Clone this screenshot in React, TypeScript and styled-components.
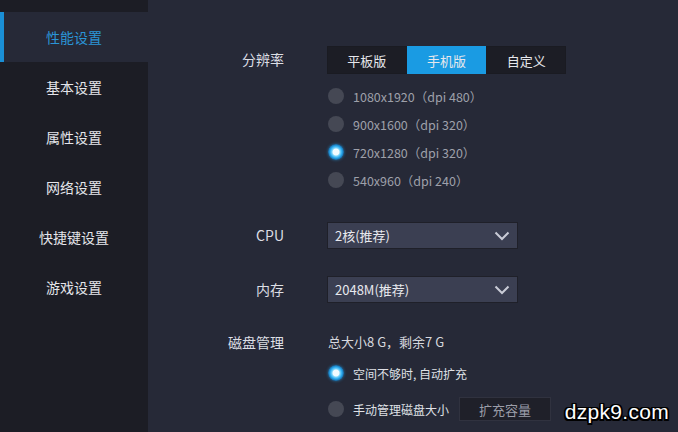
import React from 'react';
import styled, { createGlobalStyle } from 'styled-components';

const GlobalStyle = createGlobalStyle`
  html, body {
    margin: 0;
    padding: 0;
    background: #262937;
  }
  body {
    font-family: "Noto Sans CJK SC", "Noto Sans", sans-serif;
  }
`;

const menuItems = ['性能设置', '基本设置', '属性设置', '网络设置', '快捷键设置', '游戏设置'];
const resolutions = [
  '1080x1920（dpi 480）',
  '900x1600（dpi 320）',
  '720x1280（dpi 320）',
  '540x960（dpi 240）',
];

const Chevron: React.FC = () => (
  <svg width="16" height="10" viewBox="0 0 16 10">
    <path d="M1.5 1.5 L8 8 L14.5 1.5" fill="none" stroke="#c9cbd6" strokeWidth="2" />
  </svg>
);

const App: React.FC = () => {
  return (
    <Page>
      <GlobalStyle />
      <Sidebar>
        <SideTop />
        {menuItems.map((item, i) => (
          <MenuItem key={item} $active={i === 0}>
            {item}
          </MenuItem>
        ))}
      </Sidebar>

      <Main>
        <FormRow>
          <Label>分辨率</Label>
          <Control>
            <Segmented>
              <Segment>平板版</Segment>
              <Segment $active>手机版</Segment>
              <Segment>自定义</Segment>
            </Segmented>
            <RadioList>
              {resolutions.map((r, i) => (
                <RadioRow key={r}>
                  <Radio $checked={i === 2} />
                  <RadioText>{r}</RadioText>
                </RadioRow>
              ))}
            </RadioList>
          </Control>
        </FormRow>

        <FormRow $gap={28}>
          <Label>CPU</Label>
          <Control>
            <Select>
              <span>2核(推荐)</span>
              <Chevron />
            </Select>
          </Control>
        </FormRow>

        <FormRow $gap={27}>
          <Label>内存</Label>
          <Control>
            <Select>
              <span>2048M(推荐)</span>
              <Chevron />
            </Select>
          </Control>
        </FormRow>

        <FormRow $gap={29}>
          <Label $lh={20}>磁盘管理</Label>
          <Control>
            <DiskInfo>总大小8 G，剩余7 G</DiskInfo>
            <RadioRow $top={7}>
              <Radio $checked />
              <RadioText $bright>空间不够时, 自动扩充</RadioText>
            </RadioRow>
            <RadioRow $top={8}>
              <Radio />
              <RadioText $bright>手动管理磁盘大小</RadioText>
              <GhostButton>扩充容量</GhostButton>
            </RadioRow>
          </Control>
        </FormRow>
      </Main>

      <Watermark>dzpk9.com</Watermark>
    </Page>
  );
};

const Page = styled.div`
  position: relative;
  display: flex;
  width: 678px;
  height: 432px;
  overflow: hidden;
  background: #262937;
`;

const Sidebar = styled.nav`
  width: 148px;
  flex-shrink: 0;
  background: #1c1d25;
  display: flex;
  flex-direction: column;
`;

const SideTop = styled.div`
  height: 12px;
`;

const MenuItem = styled.div<{ $active?: boolean }>`
  height: 50px;
  display: flex;
  align-items: center;
  justify-content: center;
  font-size: 14px;
  color: ${p => (p.$active ? '#2b94d6' : '#e4e5ea')};
  background: ${p => (p.$active ? '#262937' : 'transparent')};
  border-left: 4px solid ${p => (p.$active ? '#1a8fd6' : 'transparent')};
  padding-right: 4px;
`;

const Main = styled.main`
  flex: 1;
  padding-top: 46px;
  display: flex;
  flex-direction: column;
`;

const FormRow = styled.div<{ $gap?: number }>`
  display: grid;
  grid-template-columns: 136px 1fr;
  column-gap: 43px;
  margin-top: ${p => p.$gap ?? 0}px;
`;

const Label = styled.div<{ $lh?: number }>`
  text-align: right;
  font-size: 14px;
  line-height: ${p => p.$lh ?? 27}px;
  color: #dcdee4;
`;

const Control = styled.div`
  display: flex;
  flex-direction: column;
  align-items: flex-start;
`;

const Segmented = styled.div`
  display: flex;
  width: 239px;
  height: 28px;
  background: #1c1d25;
  box-shadow: inset 0 0 0 1px #1a1b22;
`;

const Segment = styled.div<{ $active?: boolean }>`
  flex: 1;
  display: flex;
  align-items: center;
  justify-content: center;
  font-size: 13px;
  color: #e6e7ec;
  background: ${p => (p.$active ? '#1a9be3' : 'transparent')};
`;

const RadioList = styled.div`
  margin-top: 8px;
  display: flex;
  flex-direction: column;
`;

const RadioRow = styled.div<{ $top?: number }>`
  height: 28px;
  display: flex;
  align-items: center;
  margin-top: ${p => p.$top ?? 0}px;
`;

const Radio = styled.span<{ $checked?: boolean }>`
  width: 16px;
  height: 16px;
  border-radius: 50%;
  flex-shrink: 0;
  margin-left: 1px;
  background: ${p =>
    p.$checked
      ? 'radial-gradient(circle, #f2fbff 0 3px, #7fd6fb 4px, #27a6ec 6px, #17629b 8px)'
      : '#454854'};
  box-shadow: ${p => (p.$checked ? '0 0 3px rgba(40, 160, 230, 0.6)' : 'none')};
`;

const RadioText = styled.span<{ $bright?: boolean }>`
  margin-left: 9px;
  font-size: ${p => (p.$bright ? 12 : 12.5)}px;
  color: ${p => (p.$bright ? '#dfe0e5' : '#9ea0aa')};
  white-space: nowrap;
`;

const Select = styled.div`
  width: 191px;
  height: 27px;
  box-sizing: border-box;
  display: flex;
  align-items: center;
  justify-content: space-between;
  padding: 0 7px;
  background: #3b3f52;
  border: 1px solid #1f2029;
  font-size: 13px;
  color: #e8e9ee;
`;

const DiskInfo = styled.div`
  font-size: 13px;
  line-height: 20px;
  color: #d6d8de;
  padding-left: 1px;
`;

const GhostButton = styled.div`
  margin-left: 10px;
  width: 92px;
  height: 24px;
  box-sizing: border-box;
  display: flex;
  align-items: center;
  justify-content: center;
  background: #1f2029;
  border: 1px solid #30323f;
  font-size: 13px;
  color: #9b9da8;
`;

const Watermark = styled.div`
  position: absolute;
  right: 9px;
  bottom: 8px;
  font-family: "Liberation Sans", Arial, sans-serif;
  font-size: 21px;
  color: #ffffff;
  letter-spacing: 0.3px;
  text-shadow:
    -1.5px -1.5px 0 #000, 1.5px -1.5px 0 #000,
    -1.5px 1.5px 0 #000, 1.5px 1.5px 0 #000,
    0 1.5px 0 #000, 0 -1.5px 0 #000, 1.5px 0 0 #000, -1.5px 0 0 #000;
`;

export default App;
